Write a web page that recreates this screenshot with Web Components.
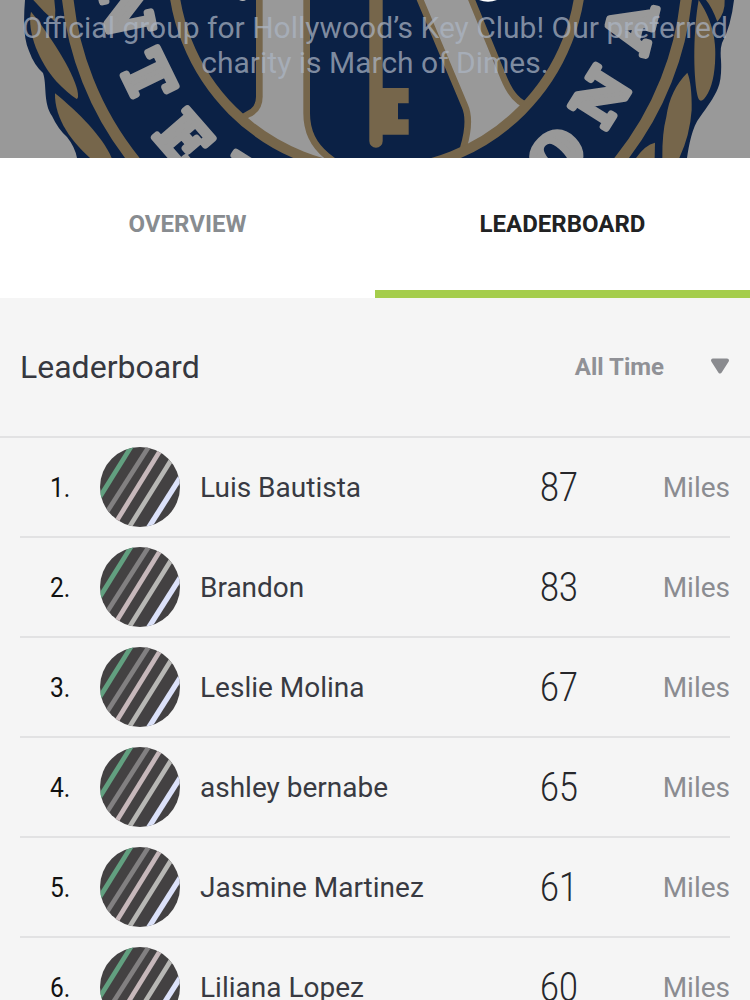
<!DOCTYPE html>
<html lang="en">
<head>
<meta charset="utf-8">
<title>Leaderboard</title>
<style>
html,body{margin:0;height:1000px;overflow:hidden;background:#f5f5f5;font-family:Roboto,"Liberation Sans",sans-serif}
</style>
</head>
<body>
<group-page></group-page>
<script>
const define=(name,html)=>{
  const t=document.createElement('template');t.innerHTML=html;
  customElements.define(name,class extends HTMLElement{
    constructor(){super();this.attachShadow({mode:'open'}).append(t.content.cloneNode(true));}
  });
};

define('club-emblem',`<style>:host{display:block;width:750px;height:158px}svg{display:block}
.l{font:bold 62px "DejaVu Serif",serif;fill:#999;stroke:#999;stroke-width:7;stroke-linejoin:round;text-anchor:middle}</style>
<svg width="750" height="158" viewBox="0 0 750 158">
<defs><clipPath id="disc"><circle cx="377" cy="-34" r="206"/></clipPath></defs>
<rect width="750" height="158" fill="#999"/>
<path fill="#0b2145" d="M25 0Q22 36 29 51Q34 65 43 73C47 84 43 103 52 116Q58 129 67 137Q75 147 77 158H687C689 145 692 127 700 117C707 107 714 98 718 88Q722 78 721 60Q720 49 722 43Q731 26 734 0Z"/>
<g fill="#76664b">
 <g transform="scale(.33333)">
  <path d="M93 35C80 95 118 188 170 245Q205 281 230 297Q237 296 232 270C216 208 151 107 93 35Z"/>
  <path d="M165 280C163 360 220 430 270 474H335C307 409 235 337 165 280Z"/>
  <path d="M100 0Q130 35 165 65Q168 30 163 0Z"/>
 </g>
 <g transform="translate(500) scale(.33333)">
  <path d="M596 0C580 90 579 220 592 285Q597 311 612 297Q640 265 645 190C652 110 630 50 596 0Z"/>
  <path d="M618 0Q635 20 652 65Q676 38 674 0Z"/>
  <path d="M562 218Q510 270 499 350Q486 400 487 474H538Q570 405 575 330Q576 250 562 218Z"/>
  <path d="M465 428Q435 435 408 474H464Z"/>
 </g>
</g>
<g clip-path="url(#disc)"><g transform="translate(250) scale(.33333)" stroke="#76664b" stroke-width="40" paint-order="stroke" fill="#999">
 <path d="M38 -30V290Q38 335 -2 352L-15 360L60 425L150 476H225Q160 425 160 340V-30Z"/>
 <path d="M509 -30L653 312Q675 360 650 445L660 458L835 326Q785 318 752 238L642 -30Z"/>
</g></g>
<g fill="none" stroke="#76664b"><circle cx="377" cy="-34" r="204.500" stroke-width="10"/><circle cx="377" cy="-34" r="311" stroke-width="11.500"/></g>
<path fill="#76664b" d="M369.300 0H382.700V88H408.700V103.300H398V119.300H408.700V134.700H382.700V141A6.700 6.700 0 0 1 369.300 141Z"/>
<g>
 <text class="l" transform="translate(126 7) rotate(78)" y="22">N</text>
 <text class="l" transform="translate(148 76) rotate(64)" y="22" style="font-size:59px">T</text>
 <text class="l" transform="translate(184 138) rotate(49)" y="22" style="font-size:60px">E</text>
 <text class="l" transform="translate(243 184) rotate(32)" y="22">R</text>
 <text class="l" transform="translate(556 156) rotate(-44)" y="22" style="font-size:59px">O</text>
 <text class="l" transform="translate(601 97) rotate(-58)" y="21" style="font-size:58px">N</text>
 <text class="l" transform="translate(630 27) rotate(-76)" y="22" style="font-size:60px">A</text>
</g>
<path fill="#fff" d="M479 0Q488 3.500 497 0Z"/><path fill="#bbb" d="M239 0Q243 2 246 0Z"/>
</svg>`);

define('group-hero',`<style>:host{display:grid;height:158px;overflow:hidden}
club-emblem,p{grid-area:1/1}
p{margin:0;padding-top:10px;z-index:1;text-align:center;white-space:nowrap;font-size:30px;line-height:35px;color:rgba(172,181,196,.72)}</style>
<club-emblem></club-emblem><p><slot></slot></p>`);

define('tab-item',`<style>:host{flex:1;display:flex;align-items:center;justify-content:center;box-sizing:border-box;height:140px;padding-bottom:8px;font-size:24px;font-weight:700;color:#888c90}
:host([active]){color:#212223;border-bottom:8px solid #a5cd4c;padding-bottom:0}</style><span><slot></slot></span>`);
define('tab-bar',`<style>:host{display:flex;height:140px;background:#fff}</style><slot></slot>`);

define('board-header',`<style>:host{display:flex;align-items:center;box-sizing:border-box;height:140px;padding:0 20px;border-bottom:2px solid #e2e2e3;color:#36383f;font-size:32px}
.t{flex:1}.f{font-size:24px;font-weight:700;color:#909196;margin-right:46px}</style>
<span class="t"><slot></slot></span><span class="f"><slot name="filter"></slot></span>
<svg width="20" height="18" viewBox="0 0 20 18"><path d="M3 2.500H17L10 13.500Z" fill="#8a8b8f" stroke="#8a8b8f" stroke-width="4" stroke-linejoin="round"/></svg>`);

define('stripe-avatar',`<style>:host{display:block;width:80px;height:80px;border-radius:50%;overflow:hidden;background:#434142}svg{display:block}</style>
<svg width="80" height="80" viewBox="0 0 240 240" stroke-width="14" fill="none">
<path stroke="#62a080" d="M103 -16L-13 170"/><path stroke="#828081" d="M156 -16L10 212"/><path stroke="#c7b8bb" d="M197 -16L34 248"/><path stroke="#b8b8b5" d="M228 16L78 256"/><path stroke="#dce2fa" stroke-width="16" d="M256 68L133 262"/><path stroke="#b2bcb3" stroke-width="10" d="M256 145L190 249"/></svg>`);

define('leader-row',`<style>:host{display:grid;grid-template-columns:80px 100px 340px 77px 1fr;align-items:center;box-sizing:border-box;height:100px;margin:0 20px;border-bottom:2px solid #e2e2e3;font-size:28px;color:#383a42;white-space:nowrap}
.r{color:#111;font-size:27px;text-align:right;padding-right:30px;padding-top:2px}
.r span{display:inline-block;transform:scaleX(.91);transform-origin:100% 50%}
.s{font-size:41px;font-weight:300;color:#26272b}.s span{display:inline-block;transform:scaleX(.83);transform-origin:0 50%}
.u{text-align:right;color:#8b8c91}</style>
<span class="r"><span><slot name="rank"></slot></span></span><stripe-avatar></stripe-avatar><span class="n"><slot></slot></span><span class="s"><span><slot name="score"></slot></span></span><span class="u">Miles</span>`);

const people=[['Luis Bautista',87],['Brandon',83],['Leslie Molina',67],['ashley bernabe',65],['Jasmine Martinez',61],['Liliana Lopez',60]];
define('group-page',`<style>:host{display:flex;flex-direction:column;width:750px;height:1000px;overflow:hidden;background:#f5f5f5}group-hero,tab-bar,board-header,leader-row{flex:none}</style>
<group-hero>Official group for Hollywood’s Key Club! Our preferred<br>charity is March of Dimes.</group-hero>
<tab-bar><tab-item>OVERVIEW</tab-item><tab-item active>LEADERBOARD</tab-item></tab-bar>
<board-header>Leaderboard<span slot="filter">All Time</span></board-header>
${people.map(([n,s],i)=>`<leader-row><span slot="rank">${i+1}.</span>${n}<span slot="score">${s}</span></leader-row>`).join('')}`);
</script>
</body>
</html>
